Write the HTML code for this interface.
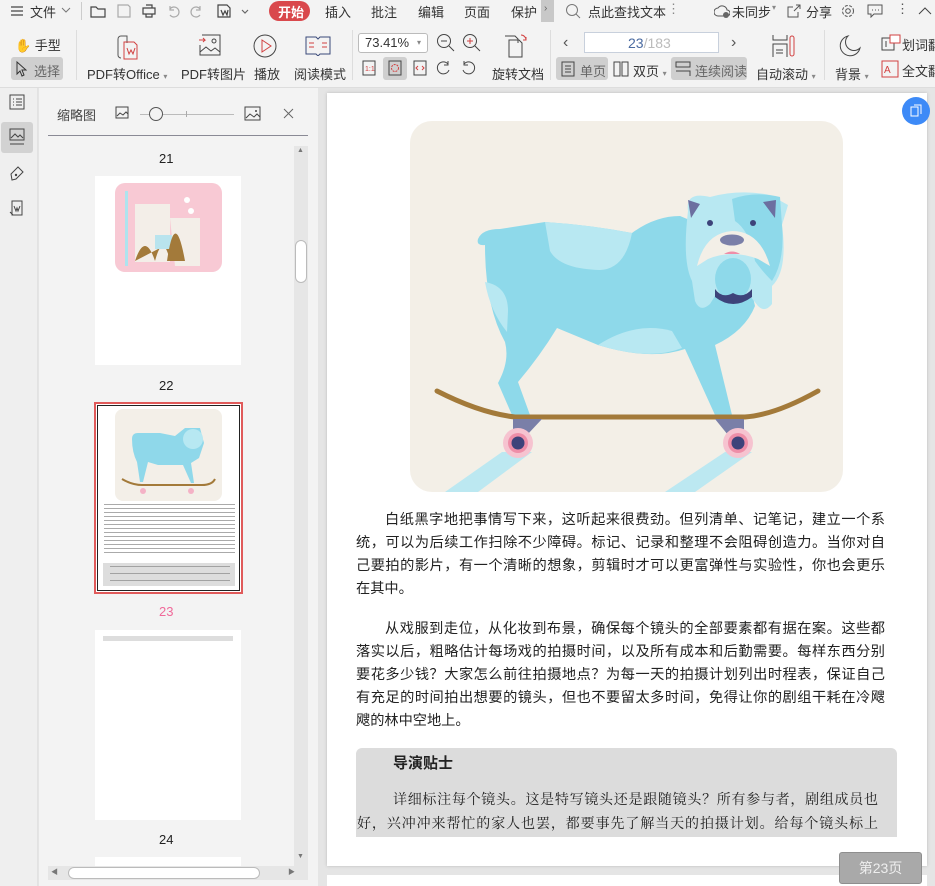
<!DOCTYPE html>
<html><head><meta charset="utf-8">
<style>
*{margin:0;padding:0;box-sizing:border-box}
body{width:935px;height:886px;overflow:hidden;background:#e4e4e4;font-family:"Liberation Sans","Noto Sans CJK SC",sans-serif;color:#333;position:relative;font-size:13px}
.a{position:absolute}
.top{left:0;top:0;width:935px;height:88px;background:#f3f3f3;border-bottom:1px solid #ddd}
.t{position:absolute;white-space:nowrap;font-size:13px;color:#333}
.ic{position:absolute}
.sel{position:absolute;background:#cfcfcf;border-radius:3px}
.l{position:absolute;left:356px;width:529px;font-size:14.2px;line-height:23px;height:23px;color:#222;text-align:justify;text-align-last:justify;white-space:nowrap}
.l.i{left:385px;width:500px}
.l.e{text-align-last:left}
</style></head><body>
<div class="a top"></div>
<!-- row1 -->
<svg class="ic" style="left:10px;top:4px" width="14" height="14"><path d="M1 3h12M1 7h12M1 11h12" stroke="#444" stroke-width="1.3"/></svg>
<div class="t" style="left:30px;top:2px">文件</div>
<svg class="ic" style="left:61px;top:6px" width="10" height="8"><path d="M1 2l4 4 4-4" stroke="#777" fill="none"/></svg>
<div class="a" style="left:81px;top:2px;width:1px;height:18px;background:#ccc"></div>
<svg class="ic" style="left:90px;top:3px" width="170" height="16" fill="none" stroke="#444" stroke-width="1.2">
<path d="M1 4h5l2 2h7v8H1z"/><path d="M28 2h10l2 2v10H28z" stroke="#aaa"/><path d="M53 5h12v6H53zM56 2h6v3M56 11v3h6v-3"/>
<path d="M80 6a5 5 0 1 1 0 6M80 3v4h4" stroke="#aaa"/><path d="M110 6a5 5 0 1 0 0 6M110 3v4h-4" stroke="#aaa"/>
<path d="M128 2h9l3 3v9h-12zM131 7l2 5 2-4 2 4 1-5"/><path d="M152 7l3 3 3-3" stroke="#666"/></svg>
<div class="a" style="left:269px;top:1px;width:41px;height:20px;border-radius:10px;background:#d9484c"></div>
<div class="t" style="left:278px;top:2px;color:#fff;font-weight:bold">开始</div>
<div class="t" style="left:325px;top:2px">插入</div>
<div class="t" style="left:371px;top:2px">批注</div>
<div class="t" style="left:418px;top:2px">编辑</div>
<div class="t" style="left:464px;top:2px">页面</div>
<div class="t" style="left:511px;top:2px">保护</div>
<div class="a" style="left:541px;top:0;width:13px;height:22px;background:#c8c8c8"></div>
<div class="t" style="left:544px;top:3px;font-size:10px;color:#666">›</div>
<svg class="ic" style="left:565px;top:3px" width="16" height="16"><circle cx="7" cy="7" r="5.5" stroke="#777" fill="none"/><path d="M11 11l4 4" stroke="#777"/></svg>
<div class="t" style="left:588px;top:2px">点此查找文本</div>
<div class="t" style="left:667px;top:1px;color:#888">⋮</div>
<svg class="ic" style="left:714px;top:3px" width="16" height="16"><path d="M4 13a4 4 0 0 1 0-8 5 5 0 0 1 9 2 3 3 0 0 1 0 6z" stroke="#555" fill="none"/><circle cx="12" cy="12" r="3" fill="#666"/></svg>
<div class="t" style="left:732px;top:2px">未同步</div>
<div class="t" style="left:772px;top:3px;font-size:8px;color:#888">▾</div>
<svg class="ic" style="left:786px;top:3px" width="16" height="16"><path d="M10 2h4v4M14 2l-6 6M12 9v5H2V4h5" stroke="#555" fill="none"/></svg>
<div class="t" style="left:806px;top:2px">分享</div>
<svg class="ic" style="left:840px;top:3px" width="16" height="16"><circle cx="8" cy="8" r="5.5" stroke="#555" fill="none" stroke-dasharray="3 1.5"/><circle cx="8" cy="8" r="2.3" stroke="#555" fill="none"/></svg>
<svg class="ic" style="left:867px;top:4px" width="16" height="14"><path d="M1 1h14v9H7l-3 3v-3H1z" stroke="#555" fill="none"/><path d="M5 6h1M8 6h1M11 6h1" stroke="#555"/></svg>
<div class="t" style="left:896px;top:1px;color:#555">⋮</div>
<svg class="ic" style="left:918px;top:6px" width="14" height="10"><path d="M1 8l6-6 6 6" stroke="#444" fill="none"/></svg>
<!-- row2 -->
<div class="t" style="left:15px;top:35px">✋ 手型</div>
<div class="sel" style="left:11px;top:57px;width:52px;height:23px"></div>
<svg class="ic" style="left:15px;top:61px" width="12" height="16"><path d="M2 1v12l3-3 2 5 2-1-2-5h4z" stroke="#333" fill="none"/></svg>
<div class="t" style="left:34px;top:61px;color:#666">选择</div>
<div class="a" style="left:76px;top:30px;width:1px;height:50px;background:#ddd"></div>
<svg class="ic" style="left:112px;top:34px" width="28" height="26" fill="none"><path d="M9 2h6v7" stroke="#555"/><path d="M9 2a3 3 0 0 0-3 3v16a3 3 0 0 0 3 3" stroke="#555"/><path d="M12 8h10l3 3v14H12z" stroke="#d24040"/><path d="M15 14l2 6 2-4 2 4 2-6" stroke="#d24040"/></svg>
<div class="t" style="left:87px;top:64px">PDF转Office <span style="font-size:8px;color:#888">▾</span></div>
<svg class="ic" style="left:198px;top:34px" width="24" height="22" fill="none" stroke="#444"><path d="M4 1h18v20H2V11"/><path d="M1 6h6l-2-2M7 6l-2 2" stroke="#d24040"/><circle cx="16" cy="7" r="2"/><path d="M2 18l6-5 5 4 4-3 5 4"/></svg>
<div class="t" style="left:181px;top:64px">PDF转图片</div>
<svg class="ic" style="left:253px;top:34px" width="24" height="24"><circle cx="12" cy="12" r="11" stroke="#444" fill="none"/><path d="M9 6v12l9-6z" stroke="#d24040" fill="none"/></svg>
<div class="t" style="left:254px;top:64px">播放</div>
<svg class="ic" style="left:305px;top:36px" width="26" height="20" fill="none" stroke="#3a4a7a"><path d="M1 1h10l2 2 2-2h10v17H15l-2 2-2-2H1z"/><path d="M4 7h5M4 11h5M17 7h5M17 11h5" stroke="#d24040"/></svg>
<div class="t" style="left:294px;top:64px">阅读模式</div>
<div class="a" style="left:352px;top:30px;width:1px;height:50px;background:#ddd"></div>
<div class="a" style="left:358px;top:33px;width:70px;height:20px;border:1px solid #bbb;border-radius:3px;background:#fff"></div>
<div class="t" style="left:365px;top:35px">73.41%</div>
<div class="t" style="left:417px;top:38px;font-size:8px;color:#888">▾</div>
<svg class="ic" style="left:436px;top:33px" width="60" height="20" fill="none" stroke="#444"><circle cx="8" cy="8" r="6.5"/><path d="M5 8h6M13 13l5 5"/><circle cx="34" cy="8" r="6.5"/><path d="M31 8h6M34 5v6" stroke="#d24040"/><path d="M39 13l5 5"/></svg>
<svg class="ic" style="left:362px;top:60px" width="14" height="16" fill="none" stroke="#d24040"><path d="M1 1h12v14H1z" stroke="#444"/><text x="3" y="11" font-size="7" fill="#d24040" stroke="none">1:1</text></svg>
<div class="sel" style="left:383px;top:57px;width:24px;height:23px"></div>
<svg class="ic" style="left:388px;top:60px" width="14" height="16"><path d="M1 1h12v14H1z" stroke="#444" fill="none"/><circle cx="7" cy="8" r="3.5" stroke="#d24040" fill="none" stroke-dasharray="2 1"/></svg>
<svg class="ic" style="left:413px;top:60px" width="14" height="16"><path d="M1 1h12v14H1z" stroke="#444" fill="none"/><path d="M5 6l-2 2 2 2M9 6l2 2-2 2" stroke="#d24040" fill="none"/></svg>
<svg class="ic" style="left:436px;top:60px" width="40" height="16" fill="none" stroke="#444"><path d="M12 4a6 6 0 1 0 1 6M12 1v4H8"/><path d="M28 4a6 6 0 1 1-1 6M28 1v4h4"/></svg>
<svg class="ic" style="left:503px;top:32px" width="26" height="28" fill="none" stroke="#444"><path d="M6 8h10l3 3v14H6z"/><path d="M2 4h10l3 3v4"/><path d="M18 3a5 5 0 0 1 5 5M23 5v3h-3" stroke="#d24040"/></svg>
<div class="t" style="left:492px;top:64px">旋转文档</div>
<div class="a" style="left:550px;top:30px;width:1px;height:50px;background:#ddd"></div>
<div class="t" style="left:563px;top:34px;color:#555;font-size:16px">‹</div>
<div class="a" style="left:584px;top:32px;width:135px;height:21px;border:1px solid #c8d0dc;background:#fff"></div>
<div class="t" style="left:628px;top:35px;font-size:14px;color:#4a6aa0">23<span style="color:#bbb">/183</span></div>
<div class="t" style="left:731px;top:34px;color:#555;font-size:16px">›</div>
<div class="sel" style="left:556px;top:57px;width:52px;height:23px"></div>
<svg class="ic" style="left:561px;top:61px" width="14" height="16"><path d="M1 1h12v14H1zM4 5h6M4 8h6M4 11h6" stroke="#444" fill="none"/></svg>
<div class="t" style="left:580px;top:61px;color:#666">单页</div>
<svg class="ic" style="left:613px;top:61px" width="16" height="16"><path d="M1 1h6v14H1zM9 1h6v14H9z" stroke="#444" fill="none"/></svg>
<div class="t" style="left:633px;top:61px">双页 <span style="font-size:8px;color:#888">▾</span></div>
<div class="sel" style="left:671px;top:57px;width:76px;height:23px"></div>
<svg class="ic" style="left:675px;top:61px" width="16" height="16"><path d="M1 1h14v5H1zM1 10h14v5" stroke="#444" fill="none"/></svg>
<div class="t" style="left:695px;top:61px;color:#666">连续阅读</div>
<svg class="ic" style="left:771px;top:34px" width="26" height="24" fill="none" stroke="#444"><path d="M2 1v5h14V1M2 23V10h14v13M5 16h7M5 19h7"/><rect x="19" y="2" width="4" height="20" rx="2" stroke="#d24040"/></svg>
<div class="t" style="left:756px;top:64px">自动滚动 <span style="font-size:8px;color:#888">▾</span></div>
<div class="a" style="left:824px;top:30px;width:1px;height:50px;background:#ddd"></div>
<svg class="ic" style="left:838px;top:34px" width="24" height="24"><path d="M10 2a10 10 0 1 0 12 12A8 8 0 0 1 10 2z" stroke="#444" fill="none"/></svg>
<div class="t" style="left:835px;top:64px">背景 <span style="font-size:8px;color:#888">▾</span></div>
<svg class="ic" style="left:881px;top:34px" width="20" height="18"><path d="M1 4h12v12H1z" stroke="#444" fill="none"/><rect x="9" y="1" width="10" height="8" fill="#fff" stroke="#d24040"/><path d="M5 7v6" stroke="#444"/></svg>
<div class="t" style="left:902px;top:35px">划词翻</div>
<svg class="ic" style="left:881px;top:60px" width="18" height="18"><path d="M1 1h16v16H1z" stroke="#d24040" fill="none"/><text x="3" y="13" font-size="10" fill="#d24040">A</text></svg>
<div class="t" style="left:902px;top:61px">全文翻</div>

<!-- left strip -->
<div class="a" style="left:0;top:88px;width:38px;height:798px;background:#efefef;border-right:1px solid #e2e2e2"></div>
<svg class="ic" style="left:9px;top:94px" width="16" height="16"><path d="M1 1h14v14H1zM4 5h1M7 5h6M4 8h1M7 8h6M4 11h1M7 11h6" stroke="#444" fill="none"/></svg>
<div class="sel" style="left:1px;top:122px;width:32px;height:31px;background:#d2d2d2"></div>
<svg class="ic" style="left:9px;top:128px" width="16" height="18"><path d="M1 1h14v11H1zM1 16h14" stroke="#444" fill="none"/><path d="M2 10l4-4 3 3 2-2 3 3" stroke="#444" fill="none"/></svg>
<svg class="ic" style="left:9px;top:165px" width="16" height="18"><path d="M3 15l-1-6 7-7 5 5-7 7z" stroke="#444" fill="none"/><circle cx="7" cy="10" r="1.2" fill="#444"/></svg>
<svg class="ic" style="left:9px;top:200px" width="16" height="18"><path d="M3 1h10v14H3zM1 12l3 3" stroke="#444" fill="none"/><path d="M5 6l2 5 1-3 1 3 2-5" stroke="#444" fill="none"/></svg>

<!-- thumbnail panel -->
<div class="a" style="left:39px;top:88px;width:279px;height:798px;background:#f3f3f3"></div>
<div class="t" style="left:57px;top:105px;color:#444">缩略图</div>
<svg class="ic" style="left:115px;top:106px" width="16" height="14"><path d="M1 1h12v11H1z" stroke="#444" fill="none"/><path d="M2 10l3-3 3 2 3-3 2 2" stroke="#444" fill="none"/></svg>
<div class="a" style="left:140px;top:114px;width:94px;height:1px;background:#bbb"></div>
<div class="a" style="left:149px;top:107px;width:14px;height:14px;border-radius:50%;border:1.3px solid #555;background:#f3f3f3"></div>
<div class="a" style="left:186px;top:111px;width:1px;height:6px;background:#aaa"></div>
<svg class="ic" style="left:244px;top:106px" width="18" height="16"><path d="M1 1h15v13H1z" stroke="#444" fill="none"/><path d="M2 12l4-4 4 3 3-3 3 3" stroke="#444" fill="none"/><circle cx="12" cy="5" r="1" fill="#444"/></svg>
<svg class="ic" style="left:283px;top:108px" width="11" height="11"><path d="M1 1l9 9M10 1l-9 9" stroke="#666"/></svg>
<div class="a" style="left:48px;top:135px;width:260px;height:1px;background:#8a8a95"></div>
<div class="a" style="left:294px;top:146px;width:14px;height:720px;background:#e6e6e6"></div>
<div class="t" style="left:297px;top:147px;font-size:7px;color:#777">▲</div>
<div class="a" style="left:295px;top:240px;width:12px;height:43px;background:#fff;border:1px solid #bbb;border-radius:6px"></div>
<div class="t" style="left:297px;top:853px;font-size:7px;color:#777">▼</div>
<div class="a" style="left:48px;top:866px;width:260px;height:14px;background:#e6e6e6"></div>
<div class="a" style="left:68px;top:867px;width:192px;height:12px;background:#fff;border:1px solid #bbb;border-radius:6px"></div>
<div class="t" style="left:51px;top:867px;font-size:7px;color:#777">◀</div>
<div class="t" style="left:288px;top:867px;font-size:7px;color:#777">▶</div>

<div class="t" style="left:159px;top:151px;color:#222">21</div>
<div class="a" style="left:95px;top:176px;width:146px;height:189px;background:#fff"></div>
<svg class="ic" style="left:115px;top:183px" width="107" height="90">
<rect width="107" height="89" rx="10" fill="#f8c9d4"/>
<rect x="10" y="8" width="3" height="75" fill="#aee3ee"/>
<rect x="20" y="21" width="35" height="58" fill="#f3eee8"/>
<path d="M20 78q10-30 20 0q8-30 15 0h10V60l-20 5" fill="#a37a3a"/>
<rect x="40" y="52" width="22" height="14" fill="#b9e4ee"/>
<path d="M55 35h30v48H60z" fill="#f3eee8"/>
<path d="M52 78q8-55 18 0z" fill="#a37a3a"/>
<circle cx="72" cy="17" r="3" fill="#fff"/><circle cx="76" cy="28" r="3" fill="#fff"/>
</svg>
<div class="t" style="left:159px;top:378px;color:#222">22</div>
<div class="a" style="left:94px;top:402px;width:149px;height:192px;border:2px solid #e05a5a;background:#fff"></div>
<div class="a" style="left:97px;top:405px;width:143px;height:186px;border:1px solid #222"></div>
<svg class="ic" style="left:115px;top:409px" width="107" height="92">
<rect width="107" height="92" rx="8" fill="#f3efe8"/>
<path d="M17 30q0-6 6-6h22l15 3 10-8h15l4 15-5 15-8 5 3 20h-3l-8-18h-25l-10-3-5 20h-3l-3-20q-5-10-5-23z" fill="#8fd8ea"/>
<circle cx="78" cy="30" r="10" fill="#b7e8f2"/>
<path d="M7 70q10 6 20 6h60q10 0 13-6" stroke="#a37a3a" stroke-width="2" fill="none"/>
<circle cx="28" cy="82" r="3" fill="#f4b2c6"/><circle cx="76" cy="82" r="3" fill="#f4b2c6"/>
</svg>
<div class="a" style="left:104px;top:504px;width:131px;height:50px;background:repeating-linear-gradient(#555 0 1px,transparent 1px 4px);opacity:.5"></div>
<div class="a" style="left:103px;top:563px;width:132px;height:23px;background:#ddd"></div>
<div class="a" style="left:110px;top:566px;width:120px;height:16px;background:repeating-linear-gradient(#666 0 1px,transparent 1px 7px);opacity:.5"></div>
<div class="t" style="left:159px;top:604px;color:#f06a9a">23</div>
<div class="a" style="left:95px;top:630px;width:146px;height:190px;background:#fff"></div>
<div class="a" style="left:103px;top:636px;width:130px;height:5px;background:#ddd"></div>
<div class="t" style="left:159px;top:832px;color:#222">24</div>
<div class="a" style="left:95px;top:857px;width:146px;height:9px;background:#fff"></div>

<!-- main page -->
<div class="a" style="left:318px;top:88px;width:617px;height:798px;background:#e5e5e5"></div>
<div class="a" style="left:327px;top:93px;width:600px;height:773px;background:#fff;box-shadow:0 0 3px #bbb"></div>
<div class="a" style="left:327px;top:875px;width:600px;height:11px;background:#fff"></div>
<div class="a" style="left:902px;top:97px;width:28px;height:28px;border-radius:50%;background:#3d8af7"></div>
<svg class="ic" style="left:908px;top:103px" width="16" height="16"><path d="M3 4h7v9H3zM6 2h7v9" stroke="#fff" fill="none"/></svg>

<svg class="ic" style="left:410px;top:121px" width="433" height="371">
<rect width="433" height="371" rx="22" fill="#f3efe7"/>
<path d="M92 331h30L68 371H35zM315 331h27L285 371H255z" fill="#bce8f1"/>
<path d="M75 124Q66 125 68 118Q72 108 90 108L135 101Q180 104 222 112Q245 95 270 95L330 120L345 185Q335 210 305 224L322 294L305 294L275 228Q240 240 188 224L147 207Q130 235 108 261L120 294L102 294L88 262Q100 240 95 221Q75 185 75 124Z" fill="#8ed9ea"/>
<path d="M135 101Q180 104 222 112Q215 148 190 149Q150 148 140 130Z" fill="#b8e8f2"/>
<path d="M75 161Q98 165 98 190L97 211Q80 190 75 161Z" fill="#b8e8f2"/>
<path d="M188 224Q225 200 262 210L272 227Q240 240 188 224Z" fill="#b8e8f2"/>
<path d="M278 90Q275 70 300 76Q330 68 360 74L378 84L372 104Q378 150 362 165L362 183Q355 192 348 185L340 175Q325 185 305 175L300 183Q290 192 285 180L282 160Q272 140 278 90Z" fill="#b8e8f2"/>
<path d="M322 78Q345 70 370 76L372 104Q375 140 362 160Q352 150 345 140Q340 110 325 100Z" fill="#8ed9ea"/>
<path d="M287 145Q295 112 322 110Q350 110 360 145L348 138Q322 128 298 138Z" fill="#f3efe7"/>
<ellipse cx="323" cy="158" rx="18" ry="21" fill="#8ed9ea"/>
<path d="M305 168Q312 178 323 172Q334 178 342 168L342 176Q323 190 305 176Z" fill="#3d437a"/>
<ellipse cx="322" cy="119" rx="12" ry="5.5" fill="#7a7fa8"/>
<path d="M314 133Q322 128 330 133Z" fill="#ee8ea8"/>
<path d="M278 79L290 83L281 97Z M353 81L366 79L365 97Z" fill="#6c6fa0"/>
<circle cx="300" cy="102" r="3" fill="#3d437a"/><circle cx="343" cy="102" r="3" fill="#3d437a"/>
<path d="M27 270Q70 292 105 296L335 296Q365 294 408 270" stroke="#a37a3a" stroke-width="5" fill="none" stroke-linecap="round"/>
<path d="M103 298h29l-15 16h-14zM305 298h29v16h-16z" fill="#7a7fa8"/>
<circle cx="108" cy="322" r="15" fill="#f6c3d0"/><circle cx="108" cy="322" r="10" fill="#ee8ea8"/><circle cx="108" cy="322" r="6.5" fill="#3d437a"/>
<circle cx="328" cy="322" r="15" fill="#f6c3d0"/><circle cx="328" cy="322" r="10" fill="#ee8ea8"/><circle cx="328" cy="322" r="6.5" fill="#3d437a"/>
</svg>

<div class="l i" style="top:509px">白纸黑字地把事情写下来，这听起来很费劲。但列清单、记笔记，建立一个系</div>
<div class="l" style="top:532px">统，可以为后续工作扫除不少障碍。标记、记录和整理不会阻碍创造力。当你对自</div>
<div class="l" style="top:555px">己要拍的影片，有一个清晰的想象，剪辑时才可以更富弹性与实验性，你也会更乐</div>
<div class="l e" style="top:578px">在其中。</div>
<div class="l i" style="top:618px">从戏服到走位，从化妆到布景，确保每个镜头的全部要素都有据在案。这些都</div>
<div class="l" style="top:641px">落实以后，粗略估计每场戏的拍摄时间，以及所有成本和后勤需要。每样东西分别</div>
<div class="l" style="top:664px">要花多少钱？大家怎么前往拍摄地点？为每一天的拍摄计划列出时程表，保证自己</div>
<div class="l" style="top:687px">有充足的时间拍出想要的镜头，但也不要留太多时间，免得让你的剧组干耗在冷飕</div>
<div class="l e" style="top:710px">飕的林中空地上。</div>
<div class="a" style="left:356px;top:748px;width:541px;height:89px;background:#dcdcdc;border-radius:6px 6px 0 0"></div>
<div class="t" style="left:393px;top:752px;font-size:15px;font-weight:bold;color:#222">导演贴士</div>
<div class="a" style="left:393px;top:787px;width:485px;font-family:'Noto Serif CJK SC',serif;font-size:14px;line-height:24px;color:#222;text-align:justify;text-align-last:justify;white-space:nowrap">详细标注每个镜头。这是特写镜头还是跟随镜头？所有参与者，剧组成员也</div>
<div class="a" style="left:357px;top:811px;width:521px;font-family:'Noto Serif CJK SC',serif;font-size:14px;line-height:24px;color:#222;text-align:justify;text-align-last:justify;white-space:nowrap">好，兴冲冲来帮忙的家人也罢，都要事先了解当天的拍摄计划。给每个镜头标上</div>
<div class="a" style="left:839px;top:852px;width:83px;height:32px;background:#a9a9a9;border:1px solid #8e8e8e;border-radius:3px;color:#eee;font-size:14px;text-align:center;line-height:30px">第23页</div>
</body></html>
